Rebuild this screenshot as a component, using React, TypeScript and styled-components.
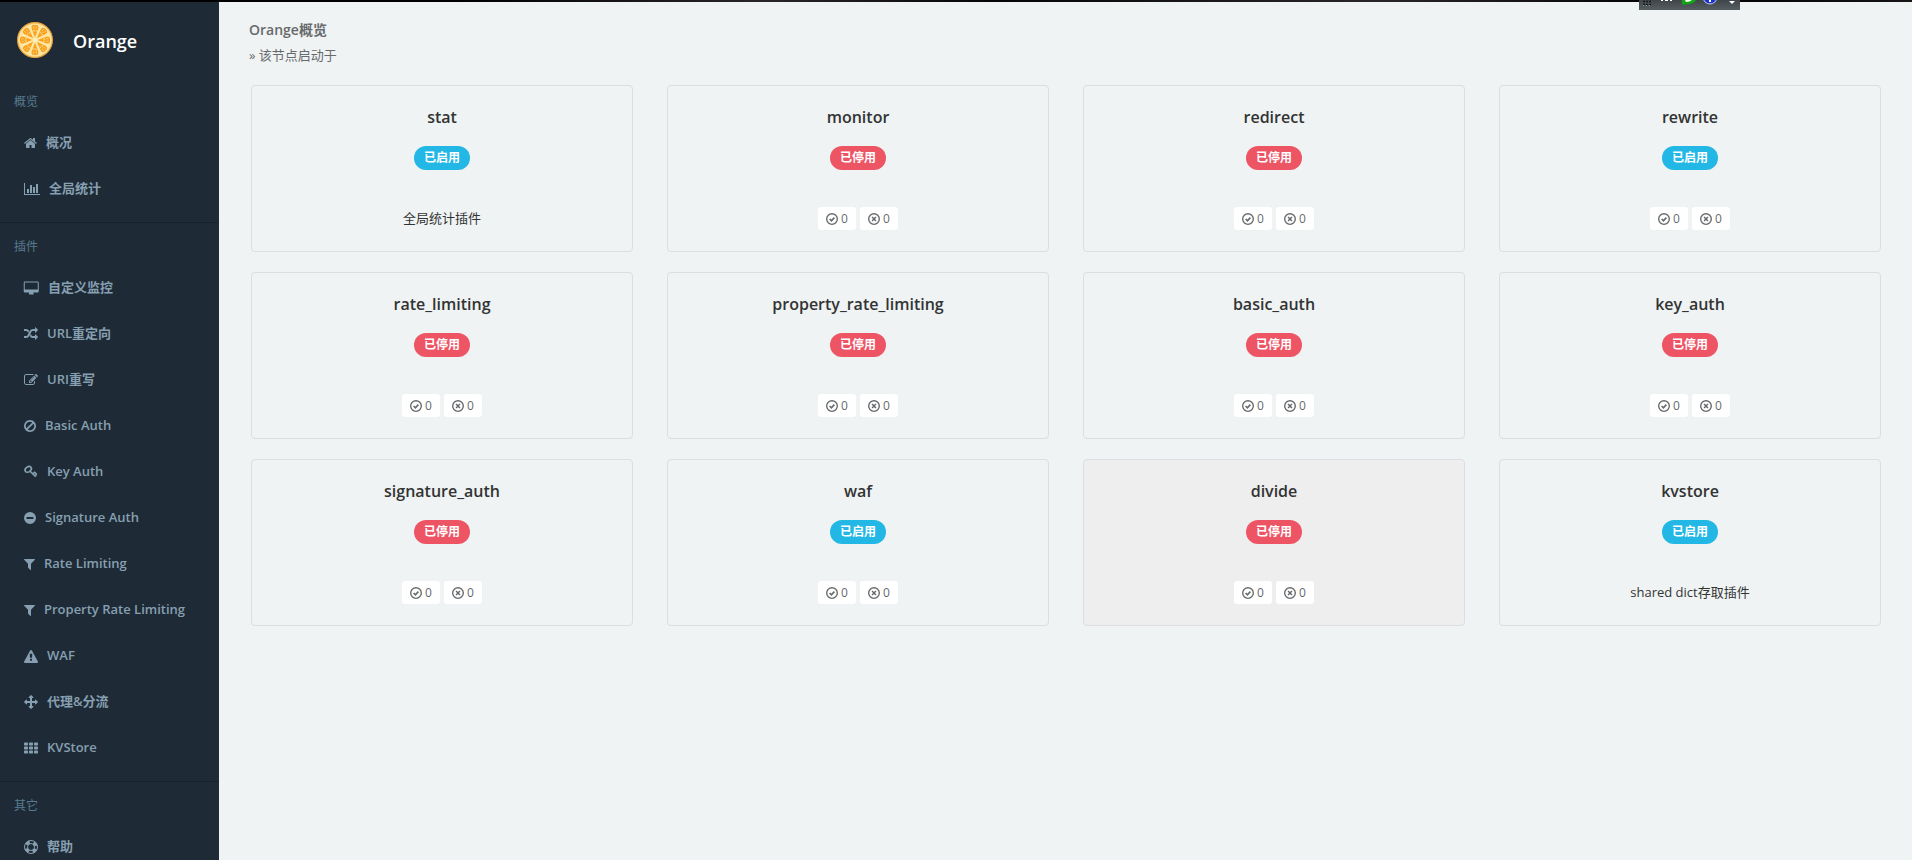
import React from "react";
import styled, { createGlobalStyle } from "styled-components";

const GlobalStyle = createGlobalStyle`
  *, *::before, *::after { box-sizing: border-box; }
  body {
    margin: 0;
    background: #eff3f4;
    color: #676a6c;
    font-family: "Open Sans", "Noto Sans CJK SC", sans-serif;
    font-size: 13px;
    line-height: 20px;
  }
  h1, h2, h3, p, ul { margin: 0; padding: 0; }
`;

const Shell = styled.div`
  position: relative;
  display: flex;
  flex-direction: column;
  height: 100vh;
  overflow: hidden;
`;

const TopEdge = styled.div`
  flex: none;
  height: 2px;
  background: linear-gradient(90deg, #000 0%, #000 24%, #2a2627 40%, #050505 52%, #2a2627 72%, #000 88%, #161414 100%);
`;

const FloatingBar = styled.div`
  position: absolute;
  top: 0;
  right: 172px;
  width: 101px;
  height: 10px;
  background: linear-gradient(#3f4548, #575e61);
  overflow: hidden;

  svg { display: block; }
`;

const Body = styled.div`
  display: flex;
  flex: 1;
  min-height: 0;
`;

const Sidebar = styled.nav`
  flex: none;
  width: 219px;
  background: #1e2b36;
  overflow-y: auto;
  scrollbar-width: none;
`;

const Brand = styled.a`
  display: flex;
  align-items: center;
  gap: 20px;
  height: 76px;
  padding: 0 17px;
  color: #fff;
  font-size: 18px;
  font-weight: 600;
  text-decoration: none;

  svg { flex: none; }
  span { padding-top: 2px; }
`;

const Section = styled.section`
  padding-bottom: 10px;

  & + & { border-top: 1px solid #17222b; }
`;

const SectionTitle = styled.h2`
  padding: 14px 14px 8px;
  color: #587a91;
  font-size: 12px;
  line-height: 20px;
  font-weight: 400;
`;

const NavList = styled.ul`
  list-style: none;
`;

const NavLink = styled.a`
  display: flex;
  align-items: center;
  gap: 9px;
  height: 46px;
  padding: 0 24px;
  color: #869fb1;
  font-weight: 600;
  text-decoration: none;
  white-space: nowrap;

  span { padding-bottom: 2px; }
`;

const Main = styled.main`
  flex: 1;
  min-width: 0;
  padding: 18px 31px 20px 32px;
  overflow: auto;
`;

const Heading = styled.header`
  margin: 0 -2px 20px;

  h1 {
    font-size: 14px;
    line-height: 20px;
    font-weight: 600;
  }

  p {
    padding-top: 5px;
    line-height: 20px;
  }
`;

const Grid = styled.div`
  display: grid;
  grid-template-columns: repeat(4, minmax(0, 1fr));
  gap: 20px 34px;
`;

const Card = styled.article<{ $hovered?: boolean }>`
  display: flex;
  flex-direction: column;
  align-items: center;
  height: 167px;
  padding: 19px 16px;
  border: 1px solid #dcdee0;
  border-radius: 4px;
  background: ${({ $hovered }) => ($hovered ? "#eee" : "transparent")};
  color: #333;

  h3 {
    font-size: 16px;
    line-height: 24px;
    font-weight: 600;
  }
`;

const Status = styled.span<{ $on: boolean }>`
  margin-top: 17px;
  padding: 0 10px;
  border-radius: 12px;
  background: ${({ $on }) => ($on ? "#23b7e5" : "#ed5565")};
  color: #fff;
  font-size: 12px;
  line-height: 24px;
  font-weight: 700;
`;

const CardFoot = styled.div`
  display: flex;
  align-items: center;
  gap: 4px;
  height: 23px;
  margin-top: 37px;

  p { padding-bottom: 2px; }
`;

const Count = styled.button`
  display: flex;
  align-items: center;
  justify-content: center;
  gap: 3px;
  width: 38px;
  height: 23px;
  padding: 0;
  border: 0;
  border-radius: 3px;
  background: #fff;
  color: #676a6c;
  font-family: inherit;
  font-size: 12px;
  line-height: 20px;
`;

type Glyph = { left?: number; width: number; shape: React.ReactNode };

const glyphs: Record<string, Glyph> = {
  home: {
    left: 64, width: 1664,
    shape: <path d="M1472 992v480q0 26-19 45t-45 19h-384v-384h-256v384h-384q-26 0-45-19t-19-45v-480q0-1 .5-3t.5-3l575-474 575 474q1 2 1 6zm223-69l-62 74q-8 9-21 11h-3q-13 0-21-7l-692-577-692 577q-12 8-24 7-13-2-21-11l-62-74q-8-10-7-23.5t11-21.5l719-599q32-26 76-26t76 26l244 204v-195q0-14 9-23t23-9h192q14 0 23 9t9 23v408l219 182q10 8 11 21.5t-7 23.5z" />,
  },
  chart: {
    width: 2048,
    shape: <path d="M640 896v512h-256v-512h256zm384-512v1024h-256v-1024h256zm1024 1152v128h-2048v-1536h128v1408h1920zm-640-896v768h-256v-768h256zm384-384v1152h-256v-1152h256z" />,
  },
  desktop: {
    width: 1920,
    shape: <path transform="translate(32 64)" d="M1728 992v-832q0-13-9.5-22.5t-22.5-9.5h-1600q-13 0-22.5 9.5t-9.5 22.5v832q0 13 9.5 22.5t22.5 9.5h1600q13 0 22.5-9.5t9.5-22.5zm128-832v1088q0 66-47 113t-113 47h-544q0 37 16 77.5t32 71 16 43.5q0 26-19 45t-45 19h-512q-26 0-45-19t-19-45q0-14 16-44t32-70 16-78h-544q-66 0-113-47t-47-113v-1088q0-66 47-113t113-47h1600q66 0 113 47t47 113z" />,
  },
  random: {
    width: 1792,
    shape: <path d="M666 481q-60 92-137 273-22-45-37-72.5t-40.5-63.5-51-56.5-63-35-81.5-14.5h-224q-14 0-23-9t-9-23v-192q0-14 9-23t23-9h224q250 0 410 225zm1126 799q0 14-9 23l-320 320q-9 9-23 9-13 0-22.5-9.5t-9.5-22.5v-192q-32 0-85 .5t-81 1-73-1-71-5-64-10.5-63-18.5-58-28.5-59-40-55-53.5-56-69.5q59-93 136-273 22 45 37 72.5t40.5 63.5 51 56.5 63 35 81.5 14.5h256v-192q0-14 9-23t23-9q12 0 24 10l319 319q9 9 9 23zm0-896q0 14-9 23l-320 320q-9 9-23 9-13 0-22.5-9.5t-9.5-22.5v-192h-256q-48 0-87 15t-69 45-51 61.5-45 77.5q-32 62-78 171-29 66-49.5 111t-54 105-64 100-74 83-90 68.5-106.5 42-128 16.5h-224q-14 0-23-9t-9-23v-192q0-14 9-23t23-9h224q48 0 87-15t69-45 51-61.5 45-77.5q32-62 78-171 29-66 49.5-111t54-105 64-100 74-83 90-68.5 106.5-42 128-16.5h256v-192q0-14 9-23t23-9q12 0 24 10l319 319q9 9 9 23z" />,
  },
  edit: {
    width: 1792,
    shape: <path d="M888 1184l116-116-152-152-116 116v56h96v96h56zm440-720q-16-16-33 1l-350 350q-17 17-1 33t33-1l350-350q17-17 1-33zm80 594v190q0 119-84.5 203.5t-203.5 84.5h-832q-119 0-203.5-84.5t-84.5-203.5v-832q0-119 84.5-203.5t203.5-84.5h832q63 0 117 25 15 7 18 23 3 17-9 29l-49 49q-14 14-32 8-23-6-45-6h-832q-66 0-113 47t-47 113v832q0 66 47 113t113 47h832q66 0 113-47t47-113v-126q0-13 9-22l64-64q15-15 35-7t20 29zm-96-738l288 288-672 672h-288v-288zm444 132l-92 92-288-288 92-92q28-28 68-28t68 28l152 152q28 28 28 68t-28 68z" />,
  },
  ban: {
    left: 128, width: 1536,
    shape: <path d="M1440 893q0-161-87-295l-754 753q137 89 297 89 111 0 211.5-43.5t173.5-116.5 116-174.5 43-212.5zm-999 299l755-754q-135-91-300-91-148 0-273 73t-198 199-73 274q0 162 89 299zm1223-299q0 157-61 300t-163.5 246-245 164-298.5 61-298.5-61-245-164-163.5-246-61-300 61-299.5 163.5-245.5 245-164 298.5-61 298.5 61 245 164 163.5 245.5 61 299.5z" />,
  },
  key: {
    width: 1792,
    shape: (
      <g fill="none" stroke="currentColor" strokeWidth="210">
        <ellipse cx="540" cy="560" rx="440" ry="320" transform="rotate(-38 540 560)" />
        <path d="M780 800L1500 1500M1130 1140l230-210 240 240M1390 1400l250-220" />
      </g>
    ),
  },
  minus: {
    left: 128, width: 1536,
    shape: <path fillRule="evenodd" d="M896 128a768 768 0 1 1 0 1536a768 768 0 0 1 0-1536zM512 768q-64 0-64 64v128q0 64 64 64h768q64 0 64-64v-128q0-64-64-64z" />,
  },
  filter: {
    width: 1408,
    shape: <path d="M1403 295q17 41-14 70l-493 493v742q0 42-39 59-13 5-25 5-27 0-45-19l-256-256q-19-19-19-45v-486l-493-493q-31-29-14-70 17-39 59-39h1280q42 0 59 39z" />,
  },
  warning: {
    width: 1792,
    shape: <path fillRule="evenodd" d="M896 128q74 0 112 68l768 1408q35 63-2 126t-110 62h-1536q-73 0-110-62t-2-126l768-1408q38-68 112-68zM768 608q-30 0-29 30l18 459q1 23 32 23h214q31 0 32-23l18-459q1-30-29-30zM800 1248q-32 0-32 32v190q0 32 32 32h192q32 0 32-32v-190q0-32-32-32z" />,
  },
  arrows: {
    width: 1792,
    shape: <path d="M1792 896q0 26-19 45l-256 256q-19 19-45 19t-45-19-19-45v-128h-384v384h128q26 0 45 19t19 45-19 45l-256 256q-19 19-45 19t-45-19l-256-256q-19-19-19-45t19-45 45-19h128v-384h-384v128q0 26-19 45t-45 19-45-19l-256-256q-19-19-19-45t19-45l256-256q19-19 45-19t45 19 19 45v128h384v-384h-128q-26 0-45-19t-19-45 19-45l256-256q19-19 45-19t45 19l256 256q19 19 19 45t-19 45-45 19h-128v384h384v-128q0-26 19-45t45-19 45 19l256 256q19 19 19 45z" />,
  },
  grid: {
    width: 1792,
    shape: (
      <>
        {[192, 704, 1216].map((y) =>
          [0, 640, 1280].map((x) => <rect key={`${x}-${y}`} x={x} y={y} width="512" height="384" rx="90" />),
        )}
      </>
    ),
  },
  ring: {
    width: 1792,
    shape: (
      <g fill="none" stroke="currentColor">
        <circle cx="896" cy="896" r="832" strokeWidth="128" />
        <circle cx="896" cy="896" r="448" strokeWidth="128" />
        <circle cx="896" cy="896" r="640" strokeWidth="440" strokeDasharray="503 502.3" strokeDashoffset="-251" />
      </g>
    ),
  },
  check: {
    left: 128, width: 1536,
    shape: (
      <g fill="none" stroke="currentColor">
        <circle cx="896" cy="896" r="680" strokeWidth="176" />
        <path d="M590 900l230 220 380-400" strokeWidth="210" />
      </g>
    ),
  },
  cross: {
    left: 128, width: 1536,
    shape: (
      <g fill="none" stroke="currentColor">
        <circle cx="896" cy="896" r="680" strokeWidth="176" />
        <path d="M650 650l492 492M1142 650l-492 492" strokeWidth="190" />
      </g>
    ),
  },
};

function Icon({ name, size = 14 }: { name: string; size?: number }) {
  const { left = 0, width, shape } = glyphs[name];
  return (
    <svg
      width={Math.round((width * size) / 1792)}
      height={size}
      viewBox={`${left} 0 ${width} 1792`}
      fill="currentColor"
      overflow="visible"
      aria-hidden="true"
    >
      {shape}
    </svg>
  );
}

function OrangeLogo() {
  return (
    <svg width="36" height="36" viewBox="0 0 36 36" aria-hidden="true">
      <circle cx="18" cy="18" r="17.4" fill="#fdd98a" stroke="#e8a33a" strokeWidth="1.1" />
      <circle cx="18" cy="18" r="15.8" fill="#ffe7a6" />
      {[0, 45, 90, 135, 180, 225, 270, 315].map((a) => (
        <g key={a} transform={`rotate(${a} 18 18)`}>
          <path d="M18 15.4L14.5 6.1Q14.2 3.3 16 3.1Q18 2.7 20 3.1Q21.8 3.3 21.5 6.1Z" fill="#f9a11f" />
          <path d="M16.6 4.4v2.4M19.2 4.2v2.4M17.8 7.4v2.4M19.6 8.2l-.5 1.8M16.4 8l.4 1.4" stroke="#ffdc8a" strokeWidth=".8" />
        </g>
      ))}
      <circle cx="18" cy="18" r="1.6" fill="#fff0bd" />
    </svg>
  );
}

const sections = [
  { title: "概览", items: [["home", "概况"], ["chart", "全局统计"]] },
  {
    title: "插件",
    items: [
      ["desktop", "自定义监控"],
      ["random", "URL重定向"],
      ["edit", "URI重写"],
      ["ban", "Basic Auth"],
      ["key", "Key Auth"],
      ["minus", "Signature Auth"],
      ["filter", "Rate Limiting"],
      ["filter", "Property Rate Limiting"],
      ["warning", "WAF"],
      ["arrows", "代理&分流"],
      ["grid", "KVStore"],
    ],
  },
  { title: "其它", items: [["ring", "帮助"]] },
];

type Plugin = { name: string; on?: boolean; note?: string; hovered?: boolean };

const plugins: Plugin[] = [
  { name: "stat", on: true, note: "全局统计插件" },
  { name: "monitor" },
  { name: "redirect" },
  { name: "rewrite", on: true },
  { name: "rate_limiting" },
  { name: "property_rate_limiting" },
  { name: "basic_auth" },
  { name: "key_auth" },
  { name: "signature_auth" },
  { name: "waf", on: true },
  { name: "divide", hovered: true },
  { name: "kvstore", on: true, note: "shared dict存取插件" },
];

function PluginCard({ name, on = false, note, hovered }: Plugin) {
  return (
    <Card $hovered={hovered}>
      <h3>{name}</h3>
      <Status $on={on}>{on ? "已启用" : "已停用"}</Status>
      <CardFoot>
        {note ? (
          <p>{note}</p>
        ) : (
          <>
            <Count type="button"><Icon name="check" />0</Count>
            <Count type="button"><Icon name="cross" />0</Count>
          </>
        )}
      </CardFoot>
    </Card>
  );
}

export default function App() {
  return (
    <Shell>
      <GlobalStyle />
      <TopEdge />
      <Body>
        <Sidebar>
          <Brand href="#">
            <OrangeLogo />
            <span>Orange</span>
          </Brand>
          {sections.map(({ title, items }) => (
            <Section key={title}>
              <SectionTitle>{title}</SectionTitle>
              <NavList>
                {items.map(([icon, label]) => (
                  <li key={label}>
                    <NavLink href="#">
                      <Icon name={icon} />
                      <span>{label}</span>
                    </NavLink>
                  </li>
                ))}
              </NavList>
            </Section>
          ))}
        </Sidebar>
        <Main>
          <Heading>
            <h1>Orange概览</h1>
            <p>» 该节点启动于</p>
          </Heading>
          <Grid>
            {plugins.map((plugin) => (
              <PluginCard key={plugin.name} {...plugin} />
            ))}
          </Grid>
        </Main>
      </Body>
      <FloatingBar>
        <svg width="101" height="10" viewBox="0 0 101 10" aria-hidden="true">
          <path d="M4 1.5h8M4 4.5h8" stroke="#15181a" strokeWidth="1.4" strokeDasharray="2 1" />
          <path d="M4 5.5h8" stroke="#9aa0a3" strokeDasharray="1 2" />
          <path d="M22 0h2v1h-2zM26 0h3v1h-3zM31 0h2v1h-2z" fill="#fff" />
          <path d="M43 0h14q-2 4-8 4l-5 1q-2-2-1-5z" fill="#12a512" />
          <path d="M46 0h7q-2 2-6 2z" fill="#fff" />
          <circle cx="71" cy="-3" r="7" fill="#1733d6" stroke="#c3c9dc" />
          <path d="M70 0h2v2h-2z" fill="#fff" />
          <path d="M90 1h6l-3 3z" fill="#fff" />
        </svg>
      </FloatingBar>
    </Shell>
  );
}
